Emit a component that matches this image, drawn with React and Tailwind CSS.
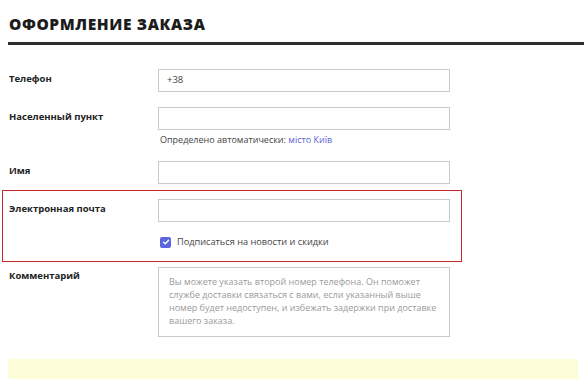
import React from 'react';

const FONT = "font-['Open_Sans','Noto_Sans',sans-serif]";

function Label({ children }) {
  return (
    <div className="w-[150px] shrink-0 pl-px pt-[3px] text-[9.5px] leading-[14px] font-bold text-[#222]">
      {children}
    </div>
  );
}

function Field({ value }) {
  return (
    <div className="w-[292px] h-[23px] border border-[#c9c9c9] flex items-center px-[8px] text-[9.5px] text-[#444]">
      {value}
    </div>
  );
}

export default function App() {
  return (
    <div className={`w-[584px] h-[386px] bg-white overflow-hidden ${FONT}`}>
      {/* Header */}
      <div className="pl-2 pt-[14px]">
        <h1 className="pl-px text-[15.5px] leading-[20px] font-extrabold tracking-[0.6px] text-[#1c1c1c]">
          ОФОРМЛЕНИЕ ЗАКАЗА
        </h1>
        <div className="mt-[8px] h-[3px] bg-[#2e2e2e]" />
      </div>

      <div className="pl-2 pt-[24px]">
        {/* Phone */}
        <div className="flex">
          <Label>Телефон</Label>
          <Field value="+38" />
        </div>

        {/* City */}
        <div className="flex mt-[15px]">
          <Label>Населенный пункт</Label>
          <div>
            <Field value="" />
            <div className="mt-[3px] pl-[2px] text-[9px] leading-[14px] text-[#444]">
              Определено автоматически: <span className="text-[#5b63d9]">місто Київ</span>
            </div>
          </div>
        </div>

        {/* Name */}
        <div className="flex mt-[14px]">
          <Label>Имя</Label>
          <Field value="" />
        </div>

        {/* Email - highlighted */}
        <div className="mt-[6px] -ml-[6px] w-[460px] border-[1.5px] border-[#c62828] pl-[5px] pt-[8px] pb-[13px]">
          <div className="flex">
            <Label>Электронная почта</Label>
            <Field value="" />
          </div>
          <div className="flex items-center mt-[14px] ml-[152px] h-[12px]">
            <div className="w-[11px] h-[11px] rounded-[2px] bg-[#5c67de] flex items-center justify-center">
              <svg width="8" height="8" viewBox="0 0 10 10">
                <path d="M2 5.2 L4.2 7.3 L8.2 2.8" fill="none" stroke="white" strokeWidth="1.8" strokeLinecap="round" strokeLinejoin="round" />
              </svg>
            </div>
            <span className="ml-[6px] text-[9.2px] leading-[12px] text-[#444]">Подписаться на новости и скидки</span>
          </div>
        </div>

        {/* Comment */}
        <div className="flex mt-[5px]">
          <div className="w-[150px] shrink-0 pl-px pt-[2px] text-[9.5px] leading-[14px] font-bold text-[#222]">Комментарий</div>
          <div className="w-[292px] h-[70px] border border-[#c9c9c9] pl-[10px] pt-[7px] text-[9px] leading-[13px] text-[#9a9a9a] whitespace-nowrap">
            Вы можете указать второй номер телефона. Он поможет<br />
            службе доставки связаться с вами, если указанный выше<br />
            номер будет недоступен, и избежать задержки при доставке<br />
            вашего заказа.
          </div>
        </div>

        {/* Notice bar */}
        <div className="mt-[22px] mr-[6px] h-[20px] bg-[#fdfdd9]" />
      </div>
    </div>
  );
}
